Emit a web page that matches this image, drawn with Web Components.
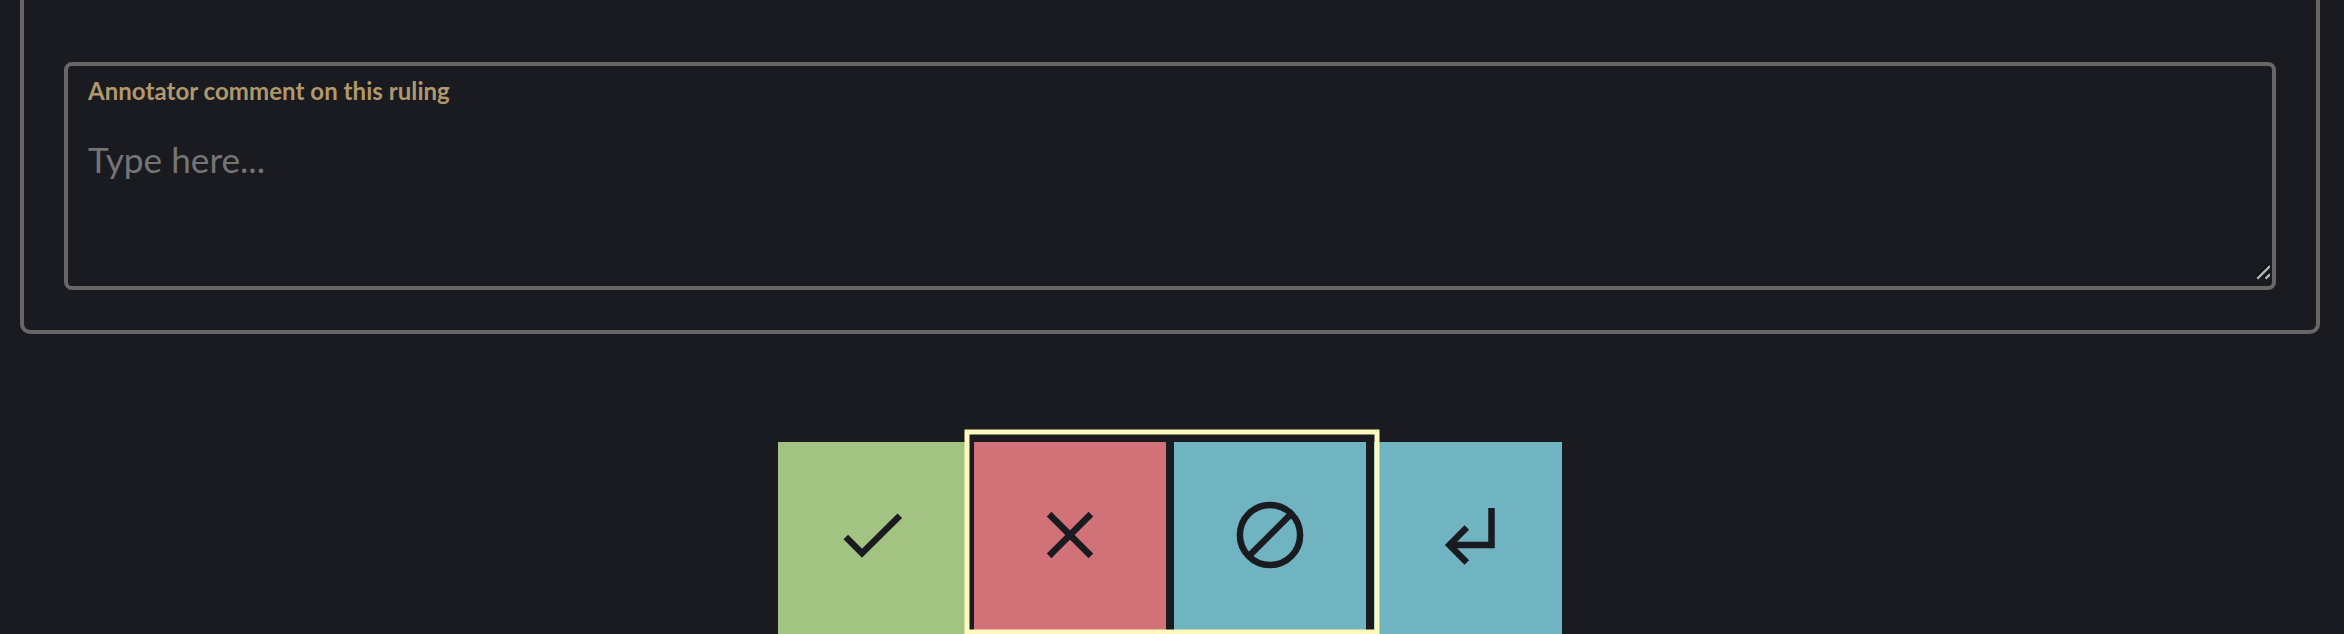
<!DOCTYPE html>
<html lang="en">
<head>
<meta charset="utf-8">
<title>Annotation</title>
<style>
html, body { margin: 0; height: 100%; background: #191b20; overflow: hidden; }
body { font-family: Lato, "Liberation Sans", sans-serif; }
</style>
</head>
<body>
<annotation-page></annotation-page>
<script>
function define(name, html) {
  customElements.define(name, class extends HTMLElement {
    constructor() {
      super();
      this.attachShadow({ mode: "open" }).innerHTML = html;
    }
  });
}

define("form-panel", `
<style>
:host { display: block; box-sizing: border-box; height: 334px; margin: 0 24px 0 20px; padding: 62px 40px 40px;
  border: 4px solid #696765; border-top: 0; border-radius: 0 0 10px 10px; }
</style><slot></slot>`);

define("comment-field", `
<style>
:host { display: block; position: relative; box-sizing: border-box; height: 228px; padding: 11px 20px;
  border: 4px solid #696765; border-radius: 8px; }
.label { font-size: 24px; line-height: 28px; font-weight: 700; letter-spacing: 0.05px; color: #b0986b; white-space: nowrap; }
.placeholder { margin-top: 32px; font-size: 35.2px; line-height: 44px; color: #757575; white-space: nowrap; }
svg { position: absolute; right: 2px; bottom: 6px; display: block; }
</style>
<div class="label"><slot name="label"></slot></div>
<div class="placeholder"><slot name="placeholder"></slot></div>
<svg width="16" height="16" viewBox="0 0 16 16" fill="none">
  <path d="M2 13.5L15 0.5M10 13.5L15.5 8" stroke="#08090b" stroke-width="2"/>
  <path d="M3.3 14.7L16 2M11.5 14.7L16 10.2" stroke="#b4b4b4" stroke-width="2.4"/>
</svg>`);

define("action-bar", `
<style>
:host { display: flex; justify-content: center; gap: 8px; position: relative; width: 784px; height: 192px; margin: 108px 0 0 778px; }
svg { position: absolute; left: 182px; top: -16px; display: block; pointer-events: none; }
</style>
<slot></slot>
<svg width="424" height="212" viewBox="0 0 424 212">
  <rect x="7" y="6" width="410" height="200" fill="none" stroke="#fff9bd" stroke-width="5"/>
</svg>`);

const icons = {
  accept: '<path d="M15.8 42L32 58.2L69.8 20.8"/>',
  reject: '<path d="M19.1 19.1L60.9 60.9M60.9 19.1L19.1 60.9"/>',
  ignore: '<circle cx="40" cy="40" r="30.1"/><path d="M19 61L61 19"/>',
  undo: '<path d="M61.5 13V50H22M36.8 32.5L19.4 50L36.8 67.5"/>'
};
customElements.define("action-button", class extends HTMLElement {
  constructor() {
    super();
    this.attachShadow({ mode: "open" }).innerHTML = `
<style>
:host { display: flex; justify-content: center; flex: none; box-sizing: border-box; width: 192px; height: 192px; padding-top: 53px; background: #70b3c1; }
:host([kind="accept"]) { width: 188px; padding-right: 4px; padding-left: 0; background: #a2c382; }
:host([kind="reject"]) { background: #d07277; }
:host([kind="undo"]) { width: 188px; padding-left: 4px; }
svg { display: block; flex: none; }
</style>
<svg width="80" height="80" viewBox="0 0 80 80" fill="none" stroke="#191b20" stroke-width="6.5">${icons[this.getAttribute("kind")]}</svg>`;
  }
});

define("annotation-page", `
<style>:host { display: block; width: 2344px; height: 634px; overflow: hidden; background: #191b20; }</style>
<form-panel>
  <comment-field>
    <span slot="label">Annotator comment on this ruling</span>
    <span slot="placeholder">Type here...</span>
  </comment-field>
</form-panel>
<action-bar>
  <action-button kind="accept"></action-button>
  <action-button kind="reject"></action-button>
  <action-button kind="ignore"></action-button>
  <action-button kind="undo"></action-button>
</action-bar>`);
</script>
</body>
</html>
